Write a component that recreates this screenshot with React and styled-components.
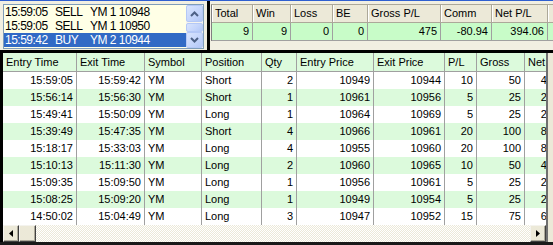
import React from "react";
import styled, { createGlobalStyle } from "styled-components";

const GlobalStyle = createGlobalStyle`
  body {
    margin: 0;
    background: #ece9d8;
  }
  * {
    box-sizing: border-box;
  }
`;

const Window = styled.div`
  width: 553px;
  height: 245px;
  overflow: hidden;
  display: flex;
  flex-direction: column;
  background: #f1efe2;
  border-top: 1px solid #2f5fd0;
  font-family: "Liberation Sans", Arial, sans-serif;
  color: #000;
`;

const TopArea = styled.div`
  display: flex;
  height: 49px;
  flex: none;
`;

const ListPane = styled.div`
  width: 205px;
  padding: 3px 1px 0 3px;
  flex: none;
`;

const ListBox = styled.div`
  display: flex;
  height: 45px;
  border: 1px solid #7f9db9;
  background: #ffffe6;
`;

const ListRows = styled.div`
  flex: 1;
  overflow: hidden;
`;

const ListRow = styled.div`
  display: flex;
  height: 14px;
  line-height: 14px;
  font-size: 12px;
  letter-spacing: -0.5px;
  padding-left: 1px;
  background: ${(p) => (p.$selected ? "#316ac5" : "transparent")};
  color: ${(p) => (p.$selected ? "#fff" : "#000")};
  white-space: nowrap;
`;

const ListCell = styled.span`
  width: ${(p) => p.$w}px;
  flex: none;
`;

const VScroll = styled.div`
  width: 17px;
  flex: none;
  display: flex;
  flex-direction: column;
  background: #f4f3ee;
`;

const XpButton = styled.div`
  height: ${(p) => p.$h}px;
  margin-top: ${(p) => p.$mt || 0}px;
  flex: none;
  display: flex;
  align-items: center;
  justify-content: center;
  border: 1px solid #b4c8f6;
  border-radius: 2px;
  background: linear-gradient(135deg, #d8e4fd 0%, #c3d4fb 60%, #b2c7f6 100%);
`;

const Spacer = styled.div`
  flex: 1;
`;

const Splitter = styled.div`
  width: 6px;
  flex: none;
  background: #000;
  border-left: 2px solid #f1efe2;
  border-right: 1px solid #f1efe2;
`;

const StatsPane = styled.div`
  flex: 1;
  padding-top: 3px;
  overflow: hidden;
`;

const StatsTable = styled.div`
  display: grid;
  grid-template-columns: 41px 38px 42px 35px 73px 51px 56px 40px;
  grid-auto-rows: 18px;
  border-left: 1px solid #808080;
  border-top: 1px solid #aca899;
  font-size: 11px;
`;

const StatHead = styled.div`
  background: #ece9d8;
  border-right: 1px solid #aca899;
  border-bottom: 1px solid #aca899;
  box-shadow: inset 1px 0 #fff;
  padding-left: 3px;
  line-height: 17px;
  white-space: nowrap;
`;

const StatValue = styled.div`
  background: #c8fcc8;
  border-right: 1px solid #a0a0a0;
  border-bottom: 1px solid #a0a0a0;
  padding-right: 3px;
  text-align: right;
  line-height: 17px;
`;

const BlackBar = styled.div`
  height: 3px;
  flex: none;
  background: #000;
`;

const BottomArea = styled.div`
  flex: 1;
  display: flex;
  flex-direction: column;
`;

const BottomBody = styled.div`
  flex: 1;
  display: flex;
`;

const LeftEdge = styled.div`
  width: 3px;
  flex: none;
  background: #000;
`;

const RightEdge = styled.div`
  flex: 1;
  background: #ece9d8;
  border-left: 2px solid #6f6f6f;
`;

const GridWrap = styled.div`
  width: 543px;
  flex: none;
  display: flex;
  flex-direction: column;
  overflow: hidden;
`;

const cols = "74px 68px 57px 60px 35px 77px 71px 32px 48px 32px";

const GridRow = styled.div`
  display: grid;
  grid-template-columns: ${cols};
  height: ${(p) => (p.$head ? 19 : 17)}px;
  background: ${(p) => (p.$green ? "#dcfadc" : "#fff")};
  border-bottom: ${(p) => (p.$head ? "1px solid #a0a0a0" : "none")};
  font-size: 11px;
  line-height: ${(p) => (p.$head ? 18 : 17)}px;
  white-space: nowrap;
`;

const Cell = styled.div`
  border-right: 1px solid #a0a0a0;
  padding: 0 3px;
  text-align: ${(p) => (p.$right ? "right" : "left")};
  overflow: visible;
`;

const HScroll = styled.div`
  height: 17px;
  flex: none;
  display: flex;
  background-color: #fff;
  background-image: repeating-conic-gradient(#ece9d8 0 25%, #fff 0 50%);
  background-size: 2px 2px;
`;

const ClassicButton = styled.div`
  width: ${(p) => p.$w}px;
  flex: none;
  display: flex;
  align-items: center;
  justify-content: center;
  background: #ece9d8;
  border: 1px solid;
  border-color: #f4f3ee #404040 #404040 #f4f3ee;
  box-shadow: inset -1px -1px #aca899;
`;

const BottomLine = styled.div`
  height: 3px;
  flex: none;
  background: #1a1a1a;
`;

const Chevron = ({ up }) => (
  <svg width="9" height="6" viewBox="0 0 9 6">
    <path
      d={up ? "M1 5 L4.5 1.5 L8 5" : "M1 1 L4.5 4.5 L8 1"}
      fill="none"
      stroke="#4d6185"
      strokeWidth="2"
    />
  </svg>
);

const Triangle = ({ left }) => (
  <svg width="4" height="7" viewBox="0 0 4 7">
    <path d={left ? "M4 0 L0 3.5 L4 7 Z" : "M0 0 L4 3.5 L0 7 Z"} fill="#000" />
  </svg>
);

const orders = [
  ["15:59:05", "SELL", "YM 1 10948"],
  ["15:59:05", "SELL", "YM 1 10950"],
  ["15:59:42", "BUY", "YM 2 10944"],
];

const stats = [
  ["Total", "9"],
  ["Win", "9"],
  ["Loss", "0"],
  ["BE", "0"],
  ["Gross P/L", "475"],
  ["Comm", "-80.94"],
  ["Net P/L", "394.06"],
  ["", ""],
];

const headers = [
  "Entry Time",
  "Exit Time",
  "Symbol",
  "Position",
  "Qty",
  "Entry Price",
  "Exit Price",
  "P/L",
  "Gross",
  "Net",
];

// which columns are right aligned
const rightCols = [true, true, false, false, true, true, true, true, true, true];

const trades = [
  ["15:59:05", "15:59:42", "YM", "Short", 2, 10949, 10944, 10, 50, 40],
  ["15:56:14", "15:56:30", "YM", "Short", 1, 10961, 10956, 5, 25, 20],
  ["15:49:41", "15:50:09", "YM", "Long", 1, 10964, 10969, 5, 25, 20],
  ["15:39:49", "15:47:35", "YM", "Short", 4, 10966, 10961, 20, 100, 80],
  ["15:18:17", "15:33:03", "YM", "Long", 4, 10955, 10960, 20, 100, 80],
  ["15:10:13", "15:11:30", "YM", "Long", 2, 10960, 10965, 10, 50, 40],
  ["15:09:35", "15:09:50", "YM", "Long", 1, 10956, 10961, 5, 25, 20],
  ["15:08:25", "15:09:20", "YM", "Long", 1, 10949, 10954, 5, 25, 20],
  ["14:50:02", "15:04:49", "YM", "Long", 3, 10947, 10952, 15, 75, 60],
];

export default function App() {
  return (
    <>
      <GlobalStyle />
      <Window>
        <TopArea>
          <ListPane>
            <ListBox>
              <ListRows>
                {orders.map((o, i) => (
                  <ListRow key={i} $selected={i === 2}>
                    <ListCell $w={50}>{o[0]}</ListCell>
                    <ListCell $w={35}>{o[1]}</ListCell>
                    <ListCell $w={80}>{o[2]}</ListCell>
                  </ListRow>
                ))}
              </ListRows>
              <VScroll>
                <XpButton $h={17}>
                  <Chevron up />
                </XpButton>
                <XpButton $h={9} $mt={1} />
                <Spacer />
                <XpButton $h={16}>
                  <Chevron />
                </XpButton>
              </VScroll>
            </ListBox>
          </ListPane>
          <Splitter />
          <StatsPane>
            <StatsTable>
              {stats.map((s, i) => (
                <StatHead key={"h" + i}>{s[0]}</StatHead>
              ))}
              {stats.map((s, i) => (
                <StatValue key={"v" + i}>{s[1]}</StatValue>
              ))}
            </StatsTable>
          </StatsPane>
        </TopArea>
        <BlackBar />
        <BottomArea>
          <BottomBody>
            <LeftEdge />
            <GridWrap>
              <GridRow $head $green>
                {headers.map((h) => (
                  <Cell key={h}>{h}</Cell>
                ))}
              </GridRow>
              {trades.map((t, i) => (
                <GridRow key={i} $green={i % 2 === 1}>
                  {t.map((v, j) => (
                    <Cell key={j} $right={rightCols[j]}>
                      {v}
                    </Cell>
                  ))}
                </GridRow>
              ))}
              <Spacer />
              <HScroll>
                <ClassicButton $w={16}>
                  <Triangle left />
                </ClassicButton>
                <ClassicButton $w={17} />
                <Spacer />
                <ClassicButton $w={16}>
                  <Triangle />
                </ClassicButton>
              </HScroll>
            </GridWrap>
            <RightEdge />
          </BottomBody>
          <BottomLine />
        </BottomArea>
      </Window>
    </>
  );
}
